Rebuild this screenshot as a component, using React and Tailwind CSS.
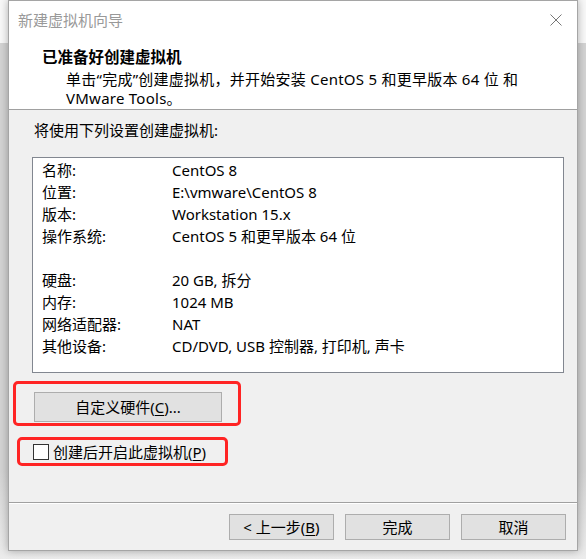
import React from "react";

const rows = [
  ["名称:", "CentOS 8"],
  ["位置:", "E:\\vmware\\CentOS 8"],
  ["版本:", "Workstation 15.x"],
  ["操作系统:", "CentOS 5 和更早版本 64 位"],
  ["", ""],
  ["硬盘:", "20 GB, 拆分"],
  ["内存:", "1024 MB"],
  ["网络适配器:", "NAT"],
  ["其他设备:", "CD/DVD, USB 控制器, 打印机, 声卡"],
];

export default function App() {
  return (
    <div className="w-[586px] h-[559px] overflow-hidden bg-[linear-gradient(to_bottom,#f8f8f8_0px,#f8f8f8_43px,#d3d3d3_43px,#d3d3d3_470px,#ececec_559px)] font-['Noto_Sans','Noto_Sans_CJK_SC',sans-serif] text-[15px] text-black">
      <div className="ml-[8px] w-[570px] h-[551px] border border-[#a5a5a5] bg-[#f0f0f0] flex flex-col shadow-[0_0_8px_rgba(0,0,0,0.3)]">
        {/* header */}
        <div className="h-[109px] bg-white border-b border-[#a0a0a0] flex flex-col">
          <div className="h-[38px] flex items-center justify-between pl-[9px] pr-[15px]">
            <span className="text-[#999999] leading-[20px]">新建虚拟机向导</span>
            <svg width="12" height="12" viewBox="0 0 12 12">
              <path d="M0.5 0.5 L11.5 11.5 M11.5 0.5 L0.5 11.5" stroke="#777" strokeWidth="1" fill="none" />
            </svg>
          </div>
          <div className="mt-[8px] pl-[33px] font-bold text-[15.5px] leading-[20px]">已准备好创建虚拟机</div>
          <div className="mt-[3px] pl-[57px] leading-[19px] tracking-[0.25px]">
            单击<span className="font-['Noto_Sans']">“</span>完成<span className="font-['Noto_Sans']">”</span>创建虚拟机，并开始安装 CentOS 5 和更早版本 64 位 和
            <br />
            VMware Tools。
          </div>
        </div>

        {/* body */}
        <div className="flex-1 flex flex-col">
          <div className="pt-[10px] pl-[25px] leading-[20px]">将使用下列设置创建虚拟机:</div>
          <div className="mt-[17px] ml-[23px] w-[532px] h-[216px] bg-white border border-[#828790] pt-[1px]">
            {rows.map(([k, v], i) => (
              <div key={i} className="flex h-[22px] items-center pl-[9px] leading-[22px]">
                <span className="w-[130px]">{k}</span>
                <span>{v}</span>
              </div>
            ))}
          </div>
          <div className="mt-[8px] ml-[4px] w-[228px] h-[45px] border-[3px] border-[#ff2424] rounded-[5px]">
            <button className="mt-[8px] ml-[18px] w-[188px] h-[30px] bg-[#e1e1e1] border border-[#adadad] flex items-center justify-center leading-[20px]">
              自定义硬件(<span className="underline underline-offset-2">C</span>)...
            </button>
          </div>
          <div className="mt-[11px] ml-[8px] w-[211px] h-[29px] border-[3px] border-[#ff2424] rounded-[5px] flex items-center pl-[13px]">
            <span className="w-[16px] h-[16px] border border-[#333333] bg-white" />
            <span className="ml-[4px] leading-[20px]">
              创建后开启此虚拟机(<span className="underline underline-offset-2">P</span>)
            </span>
          </div>
        </div>

        {/* footer */}
        <div className="h-[48px] border-t border-[#a0a0a0] shadow-[inset_0_1px_0_#ffffff] flex justify-end items-start pt-[11px] pr-[11px] gap-[11px]">
          <button className="w-[105px] h-[26px] bg-[#e1e1e1] border border-[#adadad] flex items-center justify-center leading-[20px]">
            &lt; 上一步(<span className="underline underline-offset-2">B</span>)
          </button>
          <button className="w-[105px] h-[26px] bg-[#e1e1e1] border border-[#adadad] flex items-center justify-center leading-[20px]">
            完成
          </button>
          <button className="w-[105px] h-[26px] bg-[#e1e1e1] border border-[#adadad] flex items-center justify-center leading-[20px]">
            取消
          </button>
        </div>
      </div>
    </div>
  );
}
